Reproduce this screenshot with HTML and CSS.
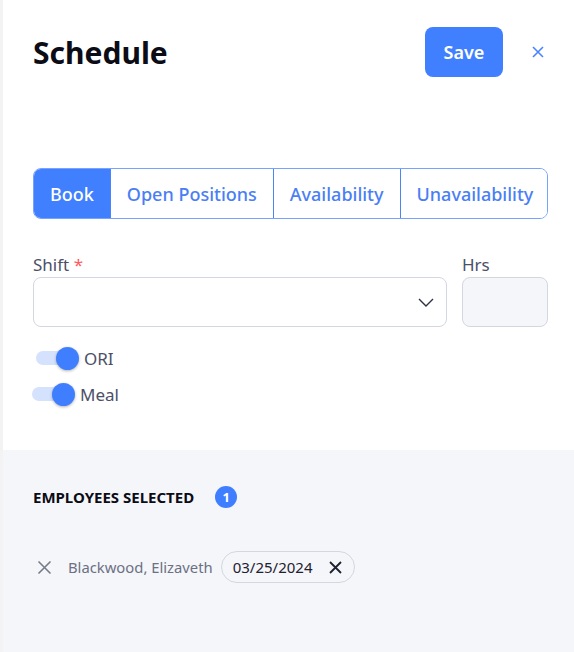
FILE: index.html
```html
<!DOCTYPE html>
<html lang="en">
<head>
    <meta charset="UTF-8">
    <meta name="viewport" content="width=device-width, initial-scale=1.0">
    <title>Schedule</title>
    <link rel="stylesheet" href="styles.css">
</head>
<body>
    <div class="panel">
        <div class="panel-body">
            <header class="panel-header">
                <h1>Schedule</h1>
                <div class="header-actions">
                    <button class="save-btn">Save</button>
                    <button class="close-btn" aria-label="Close">
                        <svg width="12" height="12" viewBox="0 0 12 12"><path d="M1 1L11 11M11 1L1 11" stroke="#4a84ff" stroke-width="1.6" fill="none"/></svg>
                    </button>
                </div>
            </header>

            <nav class="tabs">
                <button class="tab active">Book</button>
                <button class="tab">Open Positions</button>
                <button class="tab">Availability</button>
                <button class="tab">Unavailability</button>
            </nav>

            <div class="field-row">
                <div class="field field-shift">
                    <label>Shift <span class="required">*</span></label>
                    <div class="select">
                        <svg width="16" height="9" viewBox="0 0 16 9"><path d="M1 1L8 8L15 1" stroke="#2b3045" stroke-width="1.4" fill="none"/></svg>
                    </div>
                </div>
                <div class="field field-hrs">
                    <label>Hrs</label>
                    <div class="hrs-input"></div>
                </div>
            </div>

            <div class="toggles">
                <div class="toggle-row toggle-ori">
                    <span class="toggle"><span class="knob"></span></span>
                    <span class="toggle-label">ORI</span>
                </div>
                <div class="toggle-row toggle-meal">
                    <span class="toggle"><span class="knob"></span></span>
                    <span class="toggle-label">Meal</span>
                </div>
            </div>
        </div>

        <section class="selected">
            <div class="selected-title">
                <h2>EMPLOYEES SELECTED</h2>
                <span class="badge">1</span>
            </div>
            <div class="employee-row">
                <svg class="remove-icon" width="15" height="15" viewBox="0 0 15 15"><path d="M1.5 1.5L13.5 13.5M13.5 1.5L1.5 13.5" stroke="#767b8a" stroke-width="1.6" fill="none"/></svg>
                <span class="employee-name">Blackwood, Elizaveth</span>
                <span class="chip">
                    03/25/2024
                    <svg width="13" height="13" viewBox="0 0 13 13"><path d="M1 1L12 12M12 1L1 12" stroke="#1d2130" stroke-width="1.8" fill="none"/></svg>
                </span>
            </div>
        </section>
    </div>
</body>
</html>
```

FILE: styles.css
```css
body {
    font-family: "Noto Sans", "Open Sans", sans-serif;
    margin: 0;
    padding: 0;
    background-color: #f3f3f4;
}

.panel {
    margin-left: 3px;
    min-height: 652px;
    background-color: white;
    display: flex;
    flex-direction: column;
}

.panel-body {
    padding: 27px 26px 0 30px;
    height: 423px;
}

.panel-header {
    display: flex;
    justify-content: space-between;
    align-items: center;
    height: 50px;
}

.panel-header h1 {
    margin: 0;
    font-size: 30px;
    font-weight: 700;
    color: #0b0c16;
}

.header-actions {
    display: flex;
    align-items: center;
    gap: 29px;
    margin-right: 4px;
}

.save-btn {
    width: 78px;
    height: 50px;
    border: none;
    border-radius: 8px;
    background-color: #4080ff;
    color: white;
    font-family: inherit;
    font-size: 18px;
    font-weight: 600;
    cursor: pointer;
}

.close-btn {
    border: none;
    background: none;
    padding: 0;
    width: 12px;
    height: 12px;
    display: flex;
    cursor: pointer;
}

.tabs {
    display: flex;
    margin-top: 91px;
    height: 51px;
    border: 1px solid #76a3ff;
    border-radius: 8px;
    overflow: hidden;
    box-sizing: border-box;
}

.tab {
    flex: none;
    white-space: nowrap;
    border: none;
    border-left: 1px solid #4a84f6;
    background: white;
    color: #4a7ef5;
    font-family: inherit;
    font-size: 18px;
    font-weight: 500;
    padding: 0 16px;
    cursor: pointer;
}

.tab:first-child {
    border-left: none;
}

.tab:last-child {
    flex: 1;
}

.tab.active {
    background-color: #4080ff;
    color: white;
}

.field-row {
    display: flex;
    gap: 15px;
    margin-top: 33px;
}

.field label {
    display: block;
    font-size: 17px;
    line-height: 25px;
    color: #4b5068;
}

.required {
    color: #ff5a5f;
}

.field-shift {
    flex: 1;
}

.field-hrs {
    width: 86px;
}

.select {
    height: 50px;
    border: 1px solid #d3d7e0;
    border-radius: 8px;
    box-sizing: border-box;
    display: flex;
    align-items: center;
    justify-content: flex-end;
    padding-right: 12px;
}

.hrs-input {
    height: 50px;
    border: 1px solid #d3d7e0;
    border-radius: 8px;
    box-sizing: border-box;
    background-color: #f5f6fa;
}

.toggles {
    margin-top: 13px;
    display: flex;
    flex-direction: column;
}

.toggle-row {
    display: flex;
    align-items: center;
    height: 36px;
    gap: 5px;
}

.toggle-ori {
    margin-left: 3px;
}

.toggle-meal {
    margin-left: -1px;
}

.toggle {
    position: relative;
    width: 43px;
    height: 23px;
}

.toggle::before {
    content: "";
    position: absolute;
    left: 0;
    top: 4px;
    width: 34px;
    height: 14px;
    border-radius: 7px;
    background-color: #d5e2fd;
}

.knob {
    position: absolute;
    right: 0;
    top: 0;
    width: 23px;
    height: 23px;
    border-radius: 50%;
    background-color: #3f7fff;
    box-shadow: 0 1px 3px rgba(0, 0, 0, 0.3);
}

.toggle-label {
    font-size: 17px;
    color: #4b5068;
}

.selected {
    flex: 1;
    background-color: #f5f6fa;
    padding: 36px 30px 0 30px;
}

.selected-title {
    display: flex;
    align-items: center;
    gap: 21px;
    height: 22px;
}

.selected-title h2 {
    margin: 0;
    font-size: 15px;
    font-weight: 700;
    color: #0b0c16;
}

.badge {
    width: 22px;
    height: 22px;
    border-radius: 50%;
    background-color: #3f7fff;
    color: white;
    font-size: 13px;
    font-weight: 700;
    display: flex;
    align-items: center;
    justify-content: center;
}

.employee-row {
    display: flex;
    align-items: center;
    margin-top: 43px;
    height: 32px;
}

.remove-icon {
    margin-left: 4px;
    margin-right: 16px;
}

.employee-name {
    font-size: 14.8px;
    color: #6b7084;
    margin-right: 8px;
}

.chip {
    display: flex;
    align-items: center;
    gap: 17px;
    height: 32px;
    padding: 0 12px 0 11px;
    border: 1px solid #d3d7e0;
    border-radius: 16px;
    box-sizing: border-box;
    font-size: 15px;
    color: #1d2130;
}
```
